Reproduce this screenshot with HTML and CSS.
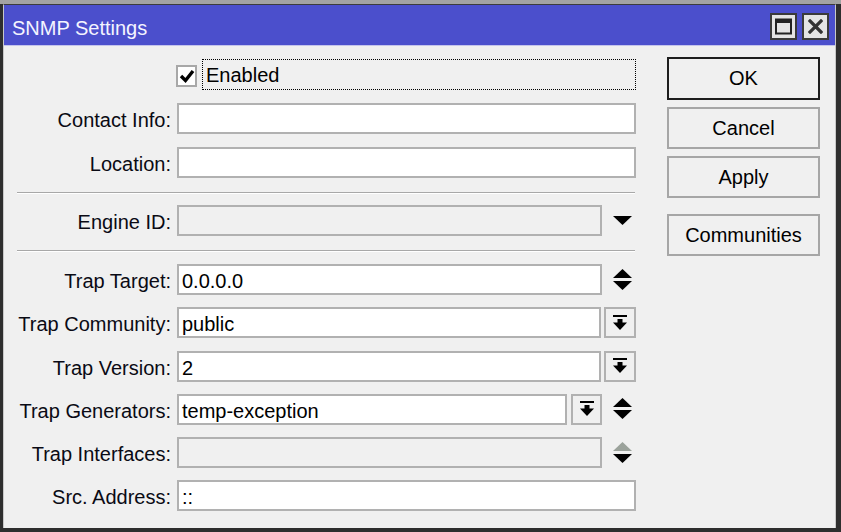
FILE: index.html
```html
<!DOCTYPE html>
<html>
<head>
<meta charset="utf-8">
<link rel="stylesheet" href="styles.css">
</head>
<body>
<div class="topstrip"></div>
<div class="win">
  <div class="titlebar">
    <span class="title">SNMP Settings</span>
    <div class="tbtns">
      <span class="tbtn"><svg width="17" height="17" viewBox="0 0 17 17"><rect x="1" y="1.5" width="15" height="14" fill="none" stroke="#222" stroke-width="2"/><rect x="1" y="1" width="15" height="4" fill="#222"/></svg></span>
      <span class="tbtn"><svg width="15" height="15" viewBox="0 0 15 15"><path d="M2 2 L13 13 M13 2 L2 13" stroke="#333" stroke-width="3.2" stroke-linecap="square"/></svg></span>
    </div>
  </div>
  <div class="content">
    <div class="form">
      <div class="grp g1">
        <div class="row">
          <span class="lbl"></span>
          <div class="ctl">
            <span class="cb"><svg width="16" height="16" viewBox="0 0 16 16"><path d="M2 8 L6.5 12.5 L14 3" fill="none" stroke="#000" stroke-width="3.4"/></svg></span>
            <span class="focus">Enabled</span>
          </div>
        </div>
        <div class="row">
          <span class="lbl">Contact Info:</span>
          <div class="ctl"><div class="field full"></div></div>
        </div>
        <div class="row">
          <span class="lbl">Location:</span>
          <div class="ctl"><div class="field full"></div></div>
        </div>
      </div>
      <div class="sep s1"></div>
      <div class="row">
        <span class="lbl">Engine ID:</span>
        <div class="ctl">
          <div class="field w425 dis"></div>
          <span class="ico"><svg width="19" height="9" viewBox="0 0 19 9"><polygon points="0,0 19,0 9.5,9" fill="#000"/></svg></span>
        </div>
      </div>
      <div class="sep s2"></div>
      <div class="grp g2">
        <div class="row">
          <span class="lbl">Trap Target:</span>
          <div class="ctl">
            <div class="field w425">0.0.0.0</div>
            <span class="ico"><svg width="19" height="22" viewBox="0 0 19 22"><polygon points="9.5,0 19,9 0,9" fill="#000"/><polygon points="0,12 19,12 9.5,21" fill="#000"/></svg></span>
          </div>
        </div>
        <div class="row">
          <span class="lbl">Trap Community:</span>
          <div class="ctl">
            <div class="field w425">public</div>
            <span class="sbtn"><svg width="14" height="16" viewBox="0 0 14 16"><rect x="0" y="0" width="14" height="2" fill="#000"/><rect x="4.5" y="4" width="5" height="4" fill="#000"/><polygon points="0,7.5 14,7.5 7,15" fill="#000"/></svg></span>
          </div>
        </div>
        <div class="row">
          <span class="lbl">Trap Version:</span>
          <div class="ctl">
            <div class="field w425">2</div>
            <span class="sbtn"><svg width="14" height="16" viewBox="0 0 14 16"><rect x="0" y="0" width="14" height="2" fill="#000"/><rect x="4.5" y="4" width="5" height="4" fill="#000"/><polygon points="0,7.5 14,7.5 7,15" fill="#000"/></svg></span>
          </div>
        </div>
        <div class="row">
          <span class="lbl">Trap Generators:</span>
          <div class="ctl">
            <div class="field w390">temp-exception</div>
            <span class="sbtn g"><svg width="14" height="16" viewBox="0 0 14 16"><rect x="0" y="0" width="14" height="2" fill="#000"/><rect x="4.5" y="4" width="5" height="4" fill="#000"/><polygon points="0,7.5 14,7.5 7,15" fill="#000"/></svg></span>
            <span class="ico ico2"><svg width="19" height="22" viewBox="0 0 19 22"><polygon points="9.5,0 19,9 0,9" fill="#000"/><polygon points="0,12 19,12 9.5,21" fill="#000"/></svg></span>
          </div>
        </div>
        <div class="row">
          <span class="lbl">Trap Interfaces:</span>
          <div class="ctl">
            <div class="field w425 dis"></div>
            <span class="ico"><svg width="19" height="22" viewBox="0 0 19 22"><polygon points="9.5,0 19,9 0,9" fill="#9ba29b"/><polygon points="0,12 19,12 9.5,21" fill="#000"/></svg></span>
          </div>
        </div>
        <div class="row">
          <span class="lbl">Src. Address:</span>
          <div class="ctl"><div class="field full">::</div></div>
        </div>
      </div>
    </div>
    <div class="buttons">
      <span class="btn def">OK</span>
      <span class="btn">Cancel</span>
      <span class="btn">Apply</span>
      <span class="btn comm">Communities</span>
    </div>
  </div>
</div>
</body>
</html>
```

FILE: styles.css
```css
html, body {
  margin: 0;
  padding: 0;
}
body {
  width: 841px;
  height: 532px;
  overflow: hidden;
  background: #2e2e2e;
  font-family: "Liberation Sans", Arial, sans-serif;
  font-size: 20px;
  color: #000;
}
.topstrip {
  height: 4px;
  background: #a3a3a3;
}
.win {
  margin-left: 3px;
  width: 831px;
  height: 523px;
  border-top: 1px solid #3c3c3c;
  border-left: 1px solid #c8c8c8;
  border-right: 1px solid #c8c8c8;
  background: #f0f0f0;
}
.titlebar {
  height: 40px;
  background: #4b4fcc;
  border-bottom: 1px solid #c4c4ec;
  display: flex;
  justify-content: space-between;
  align-items: flex-start;
}
.title {
  color: #f4f4ff;
  padding-left: 8px;
  padding-top: 7px;
  line-height: 33px;
}
.tbtns {
  display: flex;
  gap: 5px;
  margin-top: 8px;
  margin-right: 6px;
}
.tbtn {
  width: 23px;
  height: 23px;
  border: 2px solid #3a3a3a;
  background: #e4e4e4;
  display: flex;
  align-items: center;
  justify-content: center;
}
.content {
  display: flex;
  gap: 31px;
}
.form {
  width: 632px;
  display: flex;
  flex-direction: column;
}
.grp {
  display: flex;
  flex-direction: column;
}
.g1 {
  gap: 13px;
  padding-top: 13px;
}
.g2 {
  gap: 12.25px;
}
.row {
  display: grid;
  grid-template-columns: 167px 459px;
  column-gap: 6px;
  height: 31px;
  line-height: 31px;
}
.lbl {
  text-align: right;
  white-space: nowrap;
  padding-top: 2px;
  color: #0a0a14;
}
.ctl {
  display: flex;
  align-items: center;
  height: 31px;
}
.field {
  box-sizing: border-box;
  height: 31px;
  border: 2px solid #b1b1b1;
  background: #fff;
  padding-left: 3px;
  line-height: 27px;
  padding-top: 2px;
  white-space: nowrap;
}
.field.full { width: 459px; }
.field.w425 { width: 425px; }
.field.w390 { width: 390px; }
.field.dis { background: #f0f0f0; }
.ico {
  margin-left: 11px;
  display: flex;
  align-items: center;
}
.ico2 { margin-left: 11px; }
.sbtn {
  box-sizing: border-box;
  width: 32px;
  height: 31px;
  margin-left: 3px;
  border: 2px solid #b1b1b1;
  background: #f0f0f0;
  display: flex;
  align-items: center;
  justify-content: center;
}
.sbtn.g { width: 31px; margin-left: 4px; }
.cb {
  box-sizing: border-box;
  width: 21px;
  height: 22px;
  margin-left: -1px;
  margin-top: 2px;
  border: 2px solid #a8a8a8;
  background: #fff;
  display: flex;
  align-items: center;
  justify-content: center;
}
.focus {
  box-sizing: border-box;
  margin-left: 5px;
  width: 434px;
  height: 31px;
  border: 1px dotted #000;
  padding-left: 3px;
  padding-top: 2px;
  line-height: 27px;
}
.sep {
  margin-left: 13px;
  width: 618px;
  height: 1px;
  background: #a8a8a8;
  border-bottom: 1px solid #ffffff;
}
.s1 { margin-top: 14px; margin-bottom: 11px; }
.s2 { margin-top: 14px; margin-bottom: 12px; }
.buttons {
  width: 153px;
  padding-top: 11px;
  display: flex;
  flex-direction: column;
  gap: 7px;
}
.btn {
  box-sizing: border-box;
  height: 42px;
  border: 2px solid #a6a6a6;
  background: #f0f0f0;
  text-align: center;
  line-height: 38px;
}
.btn.def {
  height: 43px;
  border-color: #1e1e1e;
  line-height: 39px;
}
.btn.comm { margin-top: 9px; }
```
